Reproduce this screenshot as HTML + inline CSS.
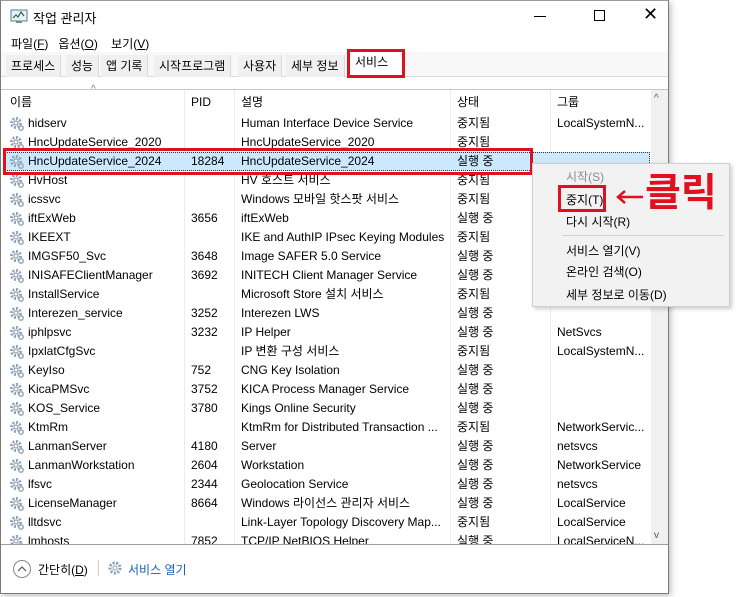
<!DOCTYPE html>
<html><head><meta charset="utf-8"><style>
*{margin:0;padding:0;box-sizing:border-box}
body{width:740px;height:597px;background:#fff;position:relative;overflow:hidden;font-family:"Liberation Sans","Noto Sans CJK KR",sans-serif;font-size:12px;color:#000}
.a{position:absolute;white-space:nowrap}
.win{position:absolute;left:0;top:0;width:669px;height:594px;border:1px solid #7a7a7a;border-top:1px solid #9a9a9a;background:#fff;box-shadow:2px 2px 6px rgba(0,0,0,.25)}
.row{position:absolute;left:0;width:650px;height:19px;line-height:19px}
.row span{position:absolute;top:0}
.c1{left:28px}.c2{left:191px}.c3{left:241px}.c4{left:457px}.c5{left:557px}
.row svg{position:absolute;left:9px;top:2px}
.vl{position:absolute;top:90px;width:1px;height:455px;background:#ececec}
.tab{position:absolute;top:55px;height:22px;line-height:22px;font-size:12px;background:#f0f0f0;border-right:1px solid #d9d9d9;padding:0 5px}
.menu span{position:absolute;left:566px;font-size:12px}
</style></head><body>
<div class="win"></div>
<svg class="a" style="left:10px;top:9px" width="18" height="16" viewBox="0 0 18 16"><rect x="1" y="1" width="16" height="11" fill="#e9f1f8" stroke="#5a7a9a"/><polyline points="3,9 6,6 8,8 11,3 14,7" fill="none" stroke="#2a6a3a" stroke-width="1.2"/><rect x="6" y="12" width="6" height="2" fill="#7a8a9a"/></svg>
<div class="a" style="left:33px;top:8px;font-size:13px">작업 관리자</div>
<div class="a" style="left:534px;top:16px;width:12px;height:1px;background:#000"></div>
<div class="a" style="left:594px;top:10px;width:11px;height:11px;border:1px solid #000"></div>
<div class="a" style="left:643px;top:4px;font-size:18px;font-weight:300">✕</div>
<div class="a" style="left:11px;top:35px;font-size:12px">파일(<u>F</u>)&nbsp;&nbsp;&nbsp;옵션(<u>O</u>)&nbsp;&nbsp;&nbsp;&nbsp;보기(<u>V</u>)</div>
<div class="a" style="left:1px;top:52px;width:667px;height:25px;background:#f8f8f8;border-bottom:1px solid #d9d9d9"></div>
<div class="tab" style="left:6px">프로세스</div>
<div class="tab" style="left:66px">성능</div>
<div class="tab" style="left:101px">앱 기록</div>
<div class="tab" style="left:154px">시작프로그램</div>
<div class="tab" style="left:238px">사용자</div>
<div class="tab" style="left:286px">세부 정보</div>
<div class="a" style="left:349px;top:52px;width:54px;height:25px;background:#fff;line-height:21px;padding-left:6px">서비스</div>
<div class="a" style="left:347px;top:49px;width:58px;height:29px;border:3px solid #e0101e"></div>
<div class="a" style="left:1px;top:89px;width:667px;height:1px;background:#c8c8c8"></div>
<div class="a" style="left:91px;top:84px;font-size:10px;color:#777">^</div>
<div class="vl" style="left:184px"></div><div class="vl" style="left:234px"></div><div class="vl" style="left:450px"></div><div class="vl" style="left:550px"></div>
<div class="a" style="left:651px;top:90px;width:17px;height:455px;background:#f0f0f0"></div>
<div class="a" style="left:654px;top:93px;font-size:10px;color:#555">^</div>
<div class="a" style="left:654px;top:530px;font-size:10px;color:#555">v</div>
<div class="row" style="top:93px"><span style="left:10px">이름</span><span class="c2">PID</span><span class="c3">설명</span><span class="c4">상태</span><span class="c5">그룹</span></div>
<div class="a" style="left:4px;top:152px;width:646px;height:19px;background:#cce8ff;border:1px dotted #333"></div>
<div id="rows"></div>
<div class="a" style="left:1px;top:544px;width:667px;height:1px;background:#a0a0a0"></div>
<div class="a" style="left:1px;top:545px;width:667px;height:48px;background:#fff"></div>
<svg class="a" style="left:12px;top:559px" width="20" height="20" viewBox="0 0 20 20"><circle cx="10" cy="10" r="8.5" fill="none" stroke="#888"/><polyline points="6,12 10,8 14,12" fill="none" stroke="#555" stroke-width="1.2"/></svg>
<div class="a" style="left:38px;top:561px;font-size:12px">간단히(<u>D</u>)</div>
<div class="a" style="left:98px;top:560px;width:1px;height:16px;background:#ccc"></div>
<svg class="a" style="left:107px;top:560px" width="16" height="16" viewBox="0 0 16 16"><circle cx="8" cy="8" r="5" fill="none" stroke="#8aa0b8" stroke-width="3" stroke-dasharray="2 1.5"/><circle cx="8" cy="8" r="2" fill="#fff" stroke="#8aa0b8"/></svg>
<div class="a" style="left:128px;top:561px;font-size:12px;color:#1a5fb4">서비스 열기</div>
<div class="a" style="left:3px;top:148px;width:530px;height:27px;border:3px solid #e0101e"></div>
<div class="a menu" style="left:532px;top:163px;width:198px;height:144px;background:#f2f2f2;border:1px solid #cfcfcf;box-shadow:2px 2px 4px rgba(0,0,0,.2)"></div>
<div class="menu"><span style="top:168px;color:#8a8a8a">시작(S)</span><span style="top:191px">중지(T)</span><span style="top:213px">다시 시작(R)</span><span style="top:242px">서비스 열기(V)</span><span style="top:263px">온라인 검색(O)</span><span style="top:286px">세부 정보로 이동(D)</span></div>
<div class="a" style="left:562px;top:235px;width:162px;height:1px;background:#d0d0d0"></div>
<div class="a" style="left:558px;top:185px;width:48px;height:27px;border:3px solid #e0101e"></div>
<svg class="a" style="left:616px;top:190px" width="28" height="14" viewBox="0 0 28 14"><line x1="3" y1="7" x2="27" y2="7" stroke="#e0101e" stroke-width="2.5"/><polyline points="9,1 2,7 9,13" fill="none" stroke="#e0101e" stroke-width="2.5"/></svg>
<div class="a" style="left:645px;top:170px;font-size:39px;color:#e0101e;font-weight:bold;line-height:48px">클릭</div>
<script>
var d=[["hidserv","","Human Interface Device Service","중지됨","LocalSystemN..."],["HncUpdateService_2020","","HncUpdateService_2020","중지됨",""],["HncUpdateService_2024","18284","HncUpdateService_2024","실행 중",""],["HvHost","","HV 호스트 서비스","중지됨",""],["icssvc","","Windows 모바일 핫스팟 서비스","중지됨",""],["iftExWeb","3656","iftExWeb","실행 중",""],["IKEEXT","","IKE and AuthIP IPsec Keying Modules","중지됨",""],["IMGSF50_Svc","3648","Image SAFER 5.0 Service","실행 중",""],["INISAFEClientManager","3692","INITECH Client Manager Service","실행 중",""],["InstallService","","Microsoft Store 설치 서비스","중지됨",""],["Interezen_service","3252","Interezen LWS","실행 중",""],["iphlpsvc","3232","IP Helper","실행 중","NetSvcs"],["IpxlatCfgSvc","","IP 변환 구성 서비스","중지됨","LocalSystemN..."],["KeyIso","752","CNG Key Isolation","실행 중",""],["KicaPMSvc","3752","KICA Process Manager Service","실행 중",""],["KOS_Service","3780","Kings Online Security","실행 중",""],["KtmRm","","KtmRm for Distributed Transaction ...","중지됨","NetworkServic..."],["LanmanServer","4180","Server","실행 중","netsvcs"],["LanmanWorkstation","2604","Workstation","실행 중","NetworkService"],["lfsvc","2344","Geolocation Service","실행 중","netsvcs"],["LicenseManager","8664","Windows 라이선스 관리자 서비스","실행 중","LocalService"],["lltdsvc","","Link-Layer Topology Discovery Map...","중지됨","LocalService"],["lmhosts","7852","TCP/IP NetBIOS Helper","실행 중","LocalServiceN..."]];
var g='<svg width="16" height="16" viewBox="0 0 16 16"><circle cx="7" cy="7" r="4.5" fill="none" stroke="#8fa3b8" stroke-width="3" stroke-dasharray="2 1.5"/><circle cx="7" cy="7" r="2" fill="#fff" stroke="#7d92a8"/><circle cx="12" cy="12" r="2.2" fill="none" stroke="#9aa8b5" stroke-width="1.5"/></svg>';
var h='';d.forEach(function(r,i){h+='<div class="row" style="top:'+(114+i*19)+'px">'+g+'<span class="c1">'+r[0]+'</span><span class="c2">'+r[1]+'</span><span class="c3">'+r[2]+'</span><span class="c4">'+r[3]+'</span><span class="c5">'+r[4]+'</span></div>';});
document.getElementById('rows').innerHTML=h;
</script>
</body></html>
